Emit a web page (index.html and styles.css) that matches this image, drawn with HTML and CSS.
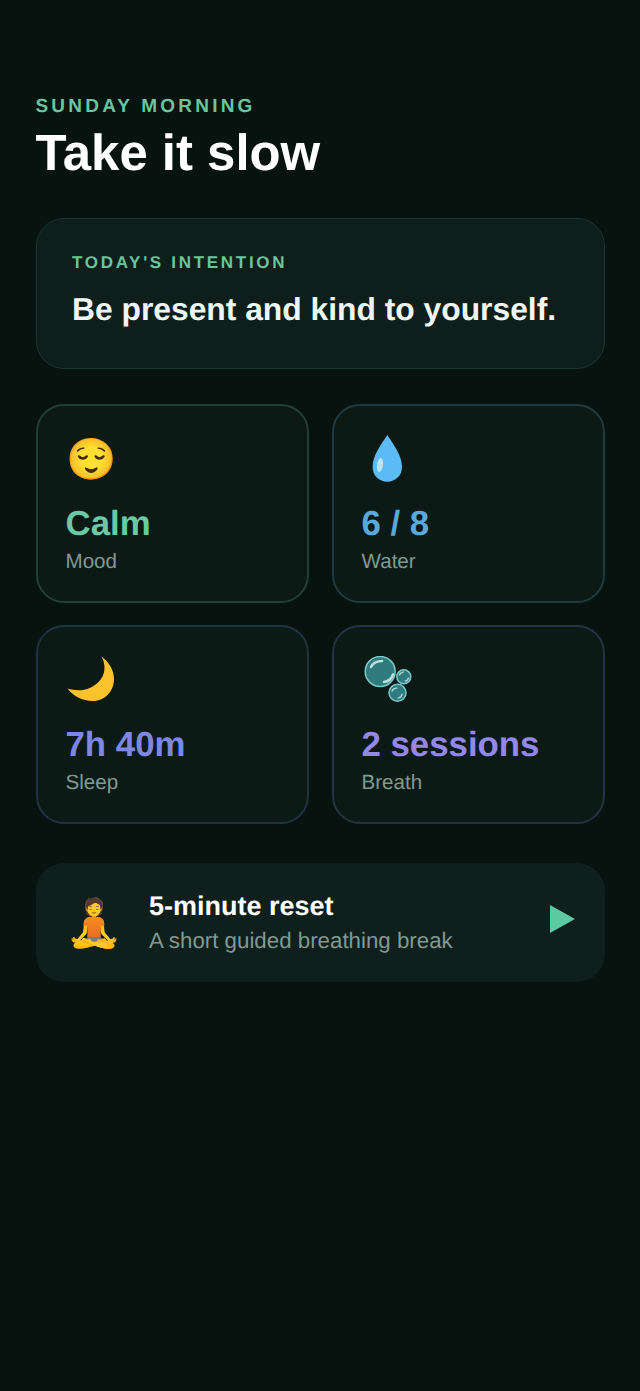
FILE: index.html
```html
<!DOCTYPE html>
<html lang="en">
<head>
  <meta charset="UTF-8" />
  <meta name="viewport" content="width=device-width, initial-scale=1.0" />
  <title>Take it slow</title>
  <link rel="stylesheet" href="styles.css">
</head>
<body>
  <header class="header">
    <div class="eyebrow">SUNDAY MORNING</div>
    <h1 class="title">Take it slow</h1>
  </header>

  <section class="intention">
    <div class="intention-label">TODAY'S INTENTION</div>
    <p class="intention-text">Be present and kind to yourself.</p>
  </section>

  <section class="stats">
    <div class="stat stat-mood">
      <div class="stat-icon">😌</div>
      <div class="stat-value">Calm</div>
      <div class="stat-label">Mood</div>
    </div>
    <div class="stat stat-water">
      <div class="stat-icon">
        <svg class="drop" viewBox="0 0 35 49" width="35" height="49">
          <path class="drop-body" d="M17.300 1 C23 10 32 21 32 33 C32 41.500 25.500 47.700 17.300 47.700 C9.100 47.700 2.600 41.500 2.600 33 C2.600 21 11.600 10 17.300 1 Z" />
          <ellipse class="drop-shine" cx="10" cy="31" rx="3" ry="7" transform="rotate(8 10 31)" />
        </svg>
      </div>
      <div class="stat-value">6 / 8</div>
      <div class="stat-label">Water</div>
    </div>
    <div class="stat stat-sleep">
      <div class="stat-icon">
        <svg class="moon" viewBox="0 0 50 48" width="50" height="48">
          <path class="moon-body" d="M35.500 1.500 C43 7 48 15 48 24 C48 36 39 46 27 46 C16 46 7 41 1.500 33.500 C6 35 12 35.500 17 35 C29 33 38 24 38.500 14 C38.700 9 37.500 5 35.500 1.500 Z" />
        </svg>
      </div>
      <div class="stat-value">7h 40m</div>
      <div class="stat-label">Sleep</div>
    </div>
    <div class="stat stat-breath">
      <div class="stat-icon">
        <svg class="bubbles" viewBox="0 0 50 48" width="50" height="48">
          <circle class="bubble" cx="17.200" cy="15.500" r="15" />
          <path class="shine" d="M8 11 C10 7 14 5 19 5" />
          <path class="shine" d="M21 26 C25 25.500 28.500 23 30 18.500" />
          <circle class="bubble" cx="40.800" cy="20.800" r="7" />
          <path class="shine thin" d="M36.500 19 C37 17 38.500 16.500 40.500 16" />
          <path class="shine thin" d="M42 25 C44 25 45 23.500 45.500 22" />
          <circle class="bubble" cx="34.500" cy="36.800" r="8.500" />
          <path class="shine thin" d="M29 35 C30 33 32 32 34 32" />
          <path class="shine thin" d="M35 42 C37 42 39 40 39 38" />
        </svg>
      </div>
      <div class="stat-value">2 sessions</div>
      <div class="stat-label">Breath</div>
    </div>
  </section>

  <section class="reset">
    <div class="reset-icon">🧘</div>
    <div class="reset-body">
      <div class="reset-title">5-minute reset</div>
      <div class="reset-sub">A short guided breathing break</div>
    </div>
    <svg class="reset-play" viewBox="0 0 25 28" width="25" height="28">
      <polygon points="0,0 25,14 0,28" />
    </svg>
  </section>
</body>
</html>
```

FILE: styles.css
```css
body {
  margin: 0;
  min-height: 1391px;
  box-sizing: border-box;
  padding: 96px 35.5px 0;
  background: #07130f;
  color: white;
  font-family: "Liberation Sans", Arial, sans-serif;
  text-rendering: geometricPrecision;
}

.eyebrow {
  color: #6bc4a0;
  font-size: 19px;
  font-weight: 700;
  letter-spacing: 3.2px;
  line-height: 22px;
}

.title {
  margin: 6px 0 0;
  font-size: 50.9px;
  font-weight: 700;
  line-height: 58px;
}

.intention {
  margin-top: 36px;
  padding: 34px 35.5px 0;
  height: 151px;
  box-sizing: border-box;
  background: #0e1e1a;
  border: 1px solid #1e362f;
  border-radius: 28px;
}

.intention-label {
  color: #6bc4a0;
  font-size: 17px;
  font-weight: 700;
  letter-spacing: 2.7px;
  line-height: 20px;
}

.intention-text {
  margin: 16px 0 0;
  color: #eef7f3;
  font-size: 31.8px;
  font-weight: 700;
  line-height: 40px;
}

.stats {
  display: grid;
  grid-template-columns: 1fr 1fr;
  column-gap: 23px;
  row-gap: 22px;
  margin-top: 35px;
}

.stat {
  height: 199px;
  box-sizing: border-box;
  padding: 25px 28px 0;
  background: #0c1a16;
  border: 2px solid #223f37;
  border-radius: 28px;
}

.stat-water { border-color: #203b3e; }
.stat-sleep { border-color: #203240; }
.stat-breath { border-color: #253243; }

.stat-icon {
  display: flex;
  align-items: flex-start;
  height: 56px;
  font-size: 40.5px;
  line-height: 56px;
}

.stat-mood .stat-icon {
  padding-left: 1px;
}

.drop {
  margin: 3px 0 0 8px;
}

.drop-body { fill: #5bbcf5; }
.drop-shine { fill: #bfe3fa; }

.moon {
  margin-top: 3px;
}

.moon-body { fill: #fbc22e; }

.bubbles {
  margin: 4px 0 0 1px;
}

.bubble {
  fill: #2f7b7d;
  stroke: #7cc9c9;
  stroke-width: 1.5;
}

.shine {
  fill: none;
  stroke: #d8f2ef;
  stroke-width: 2.5;
  stroke-linecap: round;
  opacity: 0.85;
}

.thin {
  stroke-width: 1.2;
}

.stat-value {
  margin-top: 16px;
  font-size: 34.8px;
  font-weight: 700;
  line-height: 42px;
}

.stat-mood .stat-value { color: #6bc9a5; }
.stat-water .stat-value { color: #5aa9dc; }
.stat-sleep .stat-value { color: #7c87e6; }
.stat-breath .stat-value { color: #9388e8; }

.stat-label {
  margin-top: 5px;
  color: #7f9a92;
  font-size: 20.6px;
  line-height: 24px;
}

.reset {
  display: flex;
  align-items: center;
  margin-top: 39px;
  height: 119px;
  padding: 0 30px;
  box-sizing: border-box;
  background: #0f1f1b;
  border-radius: 28px;
}

.reset-icon {
  width: 83.5px;
  flex: none;
  font-size: 46.5px;
  line-height: 60px;
}

.reset-body {
  flex: 1;
  margin-bottom: 2px;
}

.reset-title {
  font-size: 27px;
  font-weight: 700;
  line-height: 34px;
}

.reset-sub {
  margin-top: 4px;
  color: #7f9a92;
  font-size: 22.3px;
  line-height: 28px;
}

.reset-play {
  flex: none;
  margin-bottom: 7px;
  fill: #5cc9a2;
}
```
